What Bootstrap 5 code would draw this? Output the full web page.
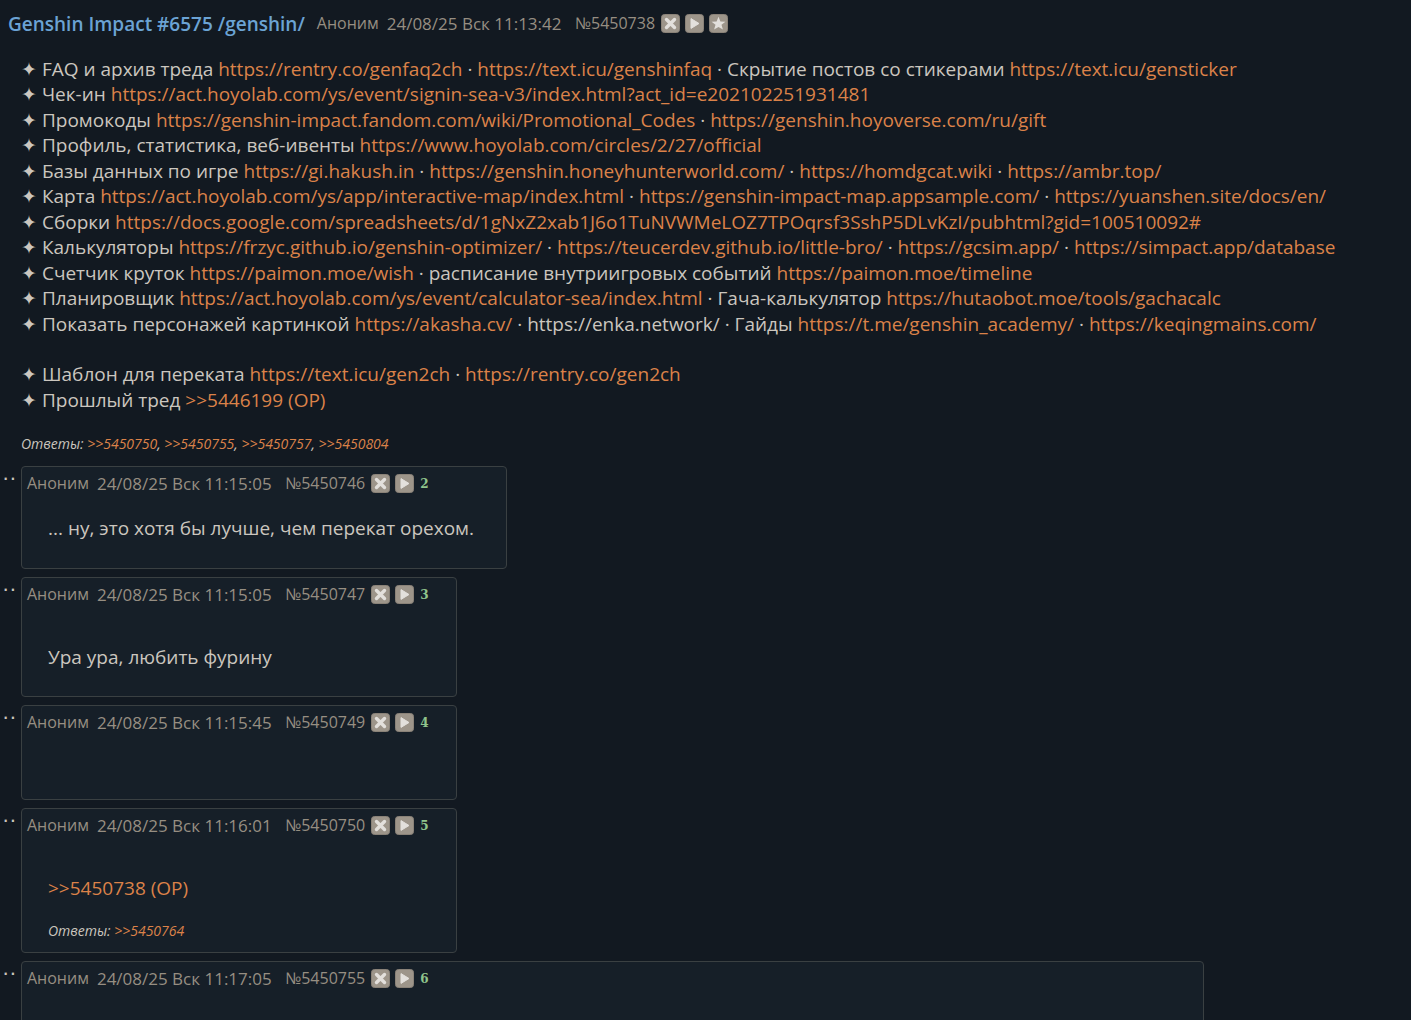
<!DOCTYPE html>
<html lang="ru">
<head>
<meta charset="utf-8">
<meta name="viewport" content="width=device-width, initial-scale=1">
<title>Genshin Impact #6575 /genshin/</title>
<link href="https://cdn.jsdelivr.net/npm/bootstrap@5.3.0/dist/css/bootstrap.min.css" rel="stylesheet">
<style>
  body { background: #121921; color: #cbc6bf; font-family: "Trebuchet MS", "Open Sans", sans-serif; font-size: 19px; line-height: 1.34; }
  a, a:hover { color: #db8249; text-decoration: none; }
  .op-text, .reply-text { font-weight: 500; }
  .thread-title { color: #6ba3d4; font-size: 19px; font-weight: 600; line-height: 24px; margin: 0 12px 0 0; }
  .post-meta { color: #968e82; font-size: 16px; line-height: 25px; column-gap: 8px; }
  .post-meta time { font-size: 17px; min-width: 180px; }
  .post-meta a { color: inherit; }
  .tool-group { margin-left: -2px; column-gap: 5px; }
  .tool { width: 19px; height: 19px; padding: 0; border: 0; background: none; display: block; }
  .tool svg { display: block; }
  .post-index { color: #90c48c; font: bold 12px/19px "DejaVu Serif", serif; margin-left: -2px; padding-top: 2px; }
  .op-head { padding: 11px 8px 0; }
  .op-text { padding: 21px 0 0 21px; white-space: nowrap; }
  .replies { font-size: 14px; font-weight: 400; font-style: italic; line-height: 22px; word-spacing: normal; }
  .op-replies { padding: 20px 0 0 21px; margin-bottom: 11px; }
  .reply-row { margin-bottom: 8px; }
  .dots { width: 21px; padding-left: 2px; font: 22px/24px "Liberation Sans", sans-serif; }
  .reply-box { background: #161f28; border: 1px solid #3a4042; border-radius: 4px; min-width: 436px; }
  .reply-box .post-meta { padding: 4px 26px 4px 5px; }
  .reply-text { padding: 16px 32px 26px 26px; }
  .after-files { padding-top: 34px; }
  .with-replies { padding-bottom: 10px; }
  .with-replies .replies { padding-top: 18px; }
  .wide-reply { width: 1183px; max-width: 100%; min-height: 145px; }
</style>
<script src="https://cdn.jsdelivr.net/npm/bootstrap@5.3.0/dist/js/bootstrap.bundle.min.js"></script>
</head>
<body class="vh-100 overflow-hidden">
<svg class="d-none" xmlns="http://www.w3.org/2000/svg">
  <symbol id="i-hide" viewBox="0 0 19 19"><rect x=".5" y=".5" width="18" height="18" rx="3" fill="#9d958a" stroke="#8a8278"/><path d="M5.5 5.5l8 8M13.5 5.5l-8 8" stroke="#e3e0dc" stroke-width="3.4" stroke-linecap="round"/></symbol>
  <symbol id="i-play" viewBox="0 0 19 19"><rect x=".5" y=".5" width="18" height="18" rx="3" fill="#9d958a" stroke="#8a8278"/><path d="M6 4.6L14 9.5L6 14.4Z" fill="#e3e0dc" stroke="#e3e0dc" stroke-linejoin="round"/></symbol>
  <symbol id="i-star" viewBox="0 0 19 19"><rect x=".5" y=".5" width="18" height="18" rx="3" fill="#9d958a" stroke="#8a8278"/><path d="M9.5 2.8l1.9 4.6 5 .3-3.9 3.1 1.4 4.8-4.4-2.7-4.4 2.7 1.4-4.8-3.9-3.1 5-.3z" fill="#e3e0dc"/></symbol>
</svg>
<main>
  <article>
    <header class="op-head d-flex align-items-center">
      <h1 class="thread-title">Genshin Impact #6575 /genshin/</h1>
      <div class="post-meta d-flex align-items-center"><span>Аноним</span><time>24/08/25 Вск 11:13:42</time><a href="#p5450738">№5450738</a>
        <span class="tool-group d-flex"><button class="tool" type="button" aria-label="Скрыть"><svg width="19" height="19"><use href="#i-hide"/></svg></button><button class="tool" type="button" aria-label="Ответить"><svg width="19" height="19"><use href="#i-play"/></svg></button><button class="tool" type="button" aria-label="В избранное"><svg width="19" height="19"><use href="#i-star"/></svg></button></span>
      </div>
    </header>
    <div class="op-text">
      ✦ FAQ и архив треда <a href="#">https://rentry.co/genfaq2ch</a> · <a href="#">https://text.icu/genshinfaq</a> · Скрытие постов со стикерами <a href="#">https://text.icu/gensticker</a><br>
      ✦ Чек-ин <a href="#">https://act.hoyolab.com/ys/event/signin-sea-v3/index.html?act_id=e202102251931481</a><br>
      ✦ Промокоды <a href="#">https://genshin-impact.fandom.com/wiki/Promotional_Codes</a> · <a href="#">https://genshin.hoyoverse.com/ru/gift</a><br>
      ✦ Профиль, статистика, веб-ивенты <a href="#">https://www.hoyolab.com/circles/2/27/official</a><br>
      ✦ Базы данных по игре <a href="#">https://gi.hakush.in</a> · <a href="#">https://genshin.honeyhunterworld.com/</a> · <a href="#">https://homdgcat.wiki</a> · <a href="#">https://ambr.top/</a><br>
      ✦ Карта <a href="#">https://act.hoyolab.com/ys/app/interactive-map/index.html</a> · <a href="#">https://genshin-impact-map.appsample.com/</a> · <a href="#">https://yuanshen.site/docs/en/</a><br>
      ✦ Сборки <a href="#">https://docs.google.com/spreadsheets/d/1gNxZ2xab1J6o1TuNVWMeLOZ7TPOqrsf3SshP5DLvKzI/pubhtml?gid=100510092#</a><br>
      ✦ Калькуляторы <a href="#">https://frzyc.github.io/genshin-optimizer/</a> · <a href="#">https://teucerdev.github.io/little-bro/</a> · <a href="#">https://gcsim.app/</a> · <a href="#">https://simpact.app/database</a><br>
      ✦ Счетчик круток <a href="#">https://paimon.moe/wish</a> · расписание внутриигровых событий <a href="#">https://paimon.moe/timeline</a><br>
      ✦ Планировщик <a href="#">https://act.hoyolab.com/ys/event/calculator-sea/index.html</a> · Гача-калькулятор <a href="#">https://hutaobot.moe/tools/gachacalc</a><br>
      ✦ Показать персонажей картинкой <a href="#">https://akasha.cv/</a> · https://enka.network/ · Гайды <a href="#">https://t.me/genshin_academy/</a> · <a href="#">https://keqingmains.com/</a><br>
      <br>
      ✦ Шаблон для переката <a href="#">https://text.icu/gen2ch</a> · <a href="#">https://rentry.co/gen2ch</a><br>
      ✦ Прошлый тред <a href="#">&gt;&gt;5446199 (OP)</a>
    </div>
    <div class="replies op-replies">Ответы: <a href="#p5450750">&gt;&gt;5450750</a>, <a href="#p5450755">&gt;&gt;5450755</a>, <a href="#">&gt;&gt;5450757</a>, <a href="#">&gt;&gt;5450804</a></div>
  </article>

  <div class="reply-row d-flex align-items-start"><span class="dots">··</span>
    <article class="reply-box">
      <div class="post-meta d-flex align-items-center"><span>Аноним</span><time>24/08/25 Вск 11:15:05</time><a href="#">№5450746</a>
        <span class="tool-group d-flex"><button class="tool" type="button" aria-label="Скрыть"><svg width="19" height="19"><use href="#i-hide"/></svg></button><button class="tool" type="button" aria-label="Ответить"><svg width="19" height="19"><use href="#i-play"/></svg></button></span><span class="post-index">2</span></div>
      <div class="reply-text">... ну, это хотя бы лучше, чем перекат орехом.</div>
    </article>
  </div>
  <div class="reply-row d-flex align-items-start"><span class="dots">··</span>
    <article class="reply-box">
      <div class="post-meta d-flex align-items-center"><span>Аноним</span><time>24/08/25 Вск 11:15:05</time><a href="#">№5450747</a>
        <span class="tool-group d-flex"><button class="tool" type="button" aria-label="Скрыть"><svg width="19" height="19"><use href="#i-hide"/></svg></button><button class="tool" type="button" aria-label="Ответить"><svg width="19" height="19"><use href="#i-play"/></svg></button></span><span class="post-index">3</span></div>
      <div class="reply-text after-files">Ура ура, любить фурину</div>
    </article>
  </div>
  <div class="reply-row d-flex align-items-start"><span class="dots">··</span>
    <article class="reply-box">
      <div class="post-meta d-flex align-items-center"><span>Аноним</span><time>24/08/25 Вск 11:15:45</time><a href="#">№5450749</a>
        <span class="tool-group d-flex"><button class="tool" type="button" aria-label="Скрыть"><svg width="19" height="19"><use href="#i-hide"/></svg></button><button class="tool" type="button" aria-label="Ответить"><svg width="19" height="19"><use href="#i-play"/></svg></button></span><span class="post-index">4</span></div>
      <div class="reply-text after-files"></div>
    </article>
  </div>
  <div class="reply-row d-flex align-items-start"><span class="dots">··</span>
    <article class="reply-box" id="p5450750">
      <div class="post-meta d-flex align-items-center"><span>Аноним</span><time>24/08/25 Вск 11:16:01</time><a href="#">№5450750</a>
        <span class="tool-group d-flex"><button class="tool" type="button" aria-label="Скрыть"><svg width="19" height="19"><use href="#i-hide"/></svg></button><button class="tool" type="button" aria-label="Ответить"><svg width="19" height="19"><use href="#i-play"/></svg></button></span><span class="post-index">5</span></div>
      <div class="reply-text after-files with-replies"><a href="#">&gt;&gt;5450738 (OP)</a>
        <div class="replies">Ответы: <a href="#">&gt;&gt;5450764</a></div></div>
    </article>
  </div>
  <div class="reply-row d-flex align-items-start"><span class="dots">··</span>
    <article class="reply-box wide-reply" id="p5450755">
      <div class="post-meta d-flex align-items-center"><span>Аноним</span><time>24/08/25 Вск 11:17:05</time><a href="#">№5450755</a>
        <span class="tool-group d-flex"><button class="tool" type="button" aria-label="Скрыть"><svg width="19" height="19"><use href="#i-hide"/></svg></button><button class="tool" type="button" aria-label="Ответить"><svg width="19" height="19"><use href="#i-play"/></svg></button></span><span class="post-index">6</span></div>
    </article>
  </div>
</main>
</body>
</html>
